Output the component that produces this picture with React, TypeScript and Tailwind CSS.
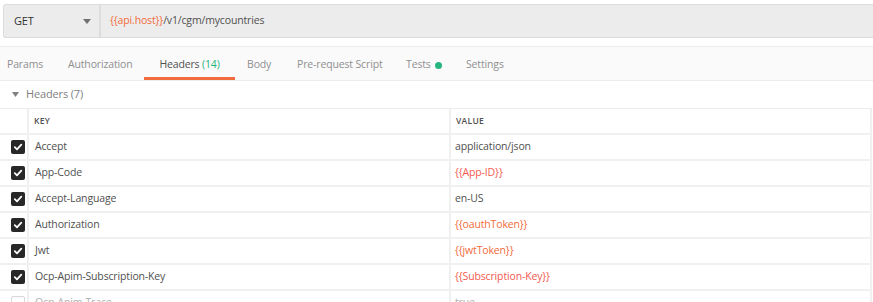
type Row = { key: string; value: string; variable?: "orange" | "red"; enabled: boolean }

const rows: Row[] = [
  { key: "Accept", value: "application/json", enabled: true },
  { key: "App-Code", value: "{{App-ID}}", variable: "red", enabled: true },
  { key: "Accept-Language", value: "en-US", enabled: true },
  { key: "Authorization", value: "{{oauthToken}}", variable: "orange", enabled: true },
  { key: "Jwt", value: "{{jwtToken}}", variable: "orange", enabled: true },
  { key: "Ocp-Apim-Subscription-Key", value: "{{Subscription-Key}}", variable: "red", enabled: true },
  { key: "Ocp-Apim-Trace", value: "true", enabled: false },
]

function Check({ on }: { on: boolean }) {
  if (!on) {
    return <div className="w-[14px] h-[14px] rounded-[2px] border border-[#d8d8d8] bg-white" />
  }
  return (
    <div className="w-[14px] h-[14px] rounded-[2px] bg-[#282828] flex items-center justify-center">
      <svg width="10" height="10" viewBox="0 0 10 10">
        <path d="M1.8 5.2 L4 7.3 L8.3 2.7" stroke="white" strokeWidth="1.8" fill="none" strokeLinecap="round" strokeLinejoin="round" />
      </svg>
    </div>
  )
}

export default function App() {
  return (
    <div
      className="w-[873px] h-[302px] overflow-hidden bg-white text-[10.5px] tracking-[-0.15px] text-[#505050]"
      style={{ fontFamily: '"Open Sans", "Noto Sans", sans-serif' }}
    >
      {/* request bar */}
      <div className="pt-[4px] pl-[3px]">
        <div className="h-[34px] flex bg-[#ececec] border border-[#dcdcdc] border-r-0 rounded-l-[3px]">
          <div className="w-[97px] flex items-center justify-between pl-[10px] pr-[8px] border-r-2 border-[#dcdcdc] text-[#333] text-[11px]">
            <span>GET</span>
            <svg width="8" height="5" viewBox="0 0 8 5"><path d="M0 0 L8 0 L4 5 Z" fill="#707070" /></svg>
          </div>
          <div className="flex items-center pl-[9px] text-[#505050]">
            <span className="text-[#f26b3a]">{"{{api.host}}"}</span>
            <span>/v1/cgm/mycountries</span>
          </div>
        </div>
      </div>

      {/* tabs */}
      <div className="mt-[8px] h-[35px] bg-[#fafafa] border-y border-[#ececec] flex items-stretch text-[#909090]">
        <div className="w-[68px] pl-[7px] pt-[3px] flex items-center">Params</div>
        <div className="w-[76px] pt-[3px] flex items-center">Authorization</div>
        <div className="relative w-[91px] pt-[3px] flex items-center justify-center text-[#505050]">
          <span>Headers <span className="text-[#26b47f]">(14)</span></span>
          <div className="absolute left-0 right-0 bottom-0 h-[3px] bg-[#f26b3a]" />
        </div>
        <div className="w-[62px] pl-[12px] pt-[3px] flex items-center">Body</div>
        <div className="w-[109px] pt-[3px] flex items-center">Pre-request Script</div>
        <div className="w-[60px] pt-[3px] flex items-center gap-[4px]">
          Tests <span className="w-[7px] h-[7px] rounded-full bg-[#26b47f] inline-block" />
        </div>
        <div className="pt-[3px] flex items-center">Settings</div>
      </div>

      {/* headers section title */}
      <div className="h-[27px] flex items-center pl-[12px] text-[#808080] text-[11px]">
        <svg width="7" height="5" viewBox="0 0 7 5" className="mr-[7px]"><path d="M0 0 L7 0 L3.5 5 Z" fill="#808080" /></svg>
        <span>Headers (7)</span>
      </div>

      {/* table */}
      <div className="w-[872px] border-t border-[#ececec]">
        <div className="grid grid-cols-[29px_422px_1fr] h-[26px] border-b-2 border-[#f0f0f0]">
          <div className="border-r-2 border-[#f0f0f0]" />
          <div className="border-r-2 border-[#f0f0f0] flex items-center pl-[5px] text-[8.5px] font-semibold text-[#505050] tracking-[0.3px]">KEY</div>
          <div className="border-r-2 border-[#f0f0f0] flex items-center pl-[5px] text-[8.5px] font-semibold text-[#505050] tracking-[0.3px]">VALUE</div>
        </div>
        {rows.map((r) => (
          <div key={r.key} className="grid grid-cols-[29px_422px_1fr] h-[26px] border-b-2 border-[#f0f0f0]">
            <div className="border-r-2 border-[#f0f0f0] flex items-center pl-[11px]">
              <Check on={r.enabled} />
            </div>
            <div className={`border-r-2 border-[#f0f0f0] flex items-center pl-[6px] ${r.enabled ? "text-[#505050]" : "text-[#b0b0b0]"}`}>
              {r.key}
            </div>
            <div
              className={`border-r-2 border-[#f0f0f0] flex items-center pl-[4px] ${
                r.variable === "red" ? "text-[#f25a4f]" : r.variable === "orange" ? "text-[#f26b3a]" : r.enabled ? "text-[#505050]" : "text-[#b0b0b0]"
              }`}
            >
              {r.value}
            </div>
          </div>
        ))}
      </div>
    </div>
  )
}
